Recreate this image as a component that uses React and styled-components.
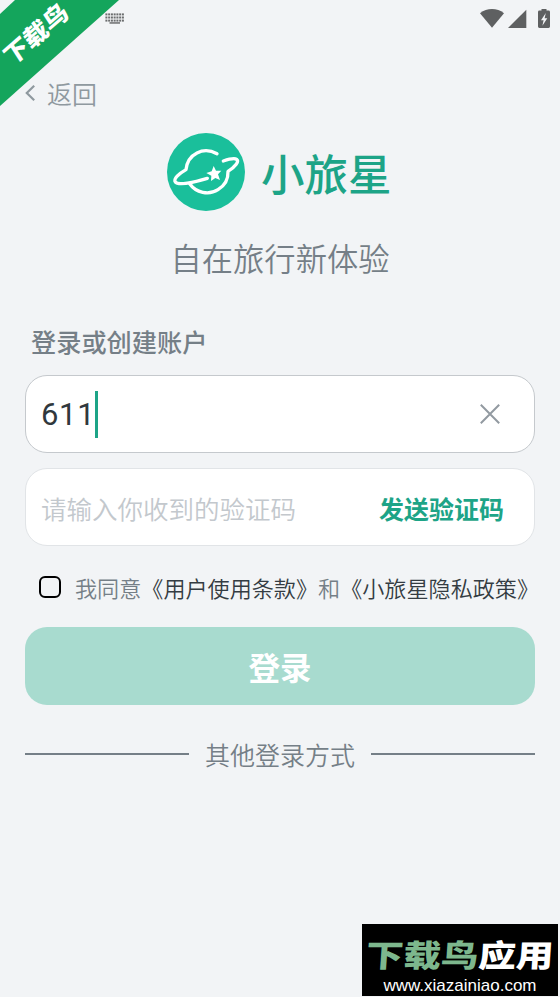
import styled, { createGlobalStyle } from 'styled-components'


const App = () => {
  return (
    <Page>
      <GlobalStyle />
      <StatusBar>
        <KeyboardIcon />
        <SystemIcons />
      </StatusBar>
      <BackButton>
        <BackIcon width="11" height="18" viewBox="0 0 11 18">
          <path d="M9.2 1.8 L1.8 9 L9.2 16.2" />
        </BackIcon>
        返回
      </BackButton>
      <Brand>
        <Logo />
        <BrandName>小旅星</BrandName>
      </Brand>
      <Slogan>自在旅行新体验</Slogan>
      <Label>登录或创建账户</Label>
      <Field $active>
        <Value>611</Value>
        <Caret />
        <ClearIcon width="20" height="20" viewBox="0 0 20 20">
          <path d="M0.8 0.8 L19.2 19.2 M19.2 0.8 L0.8 19.2" />
        </ClearIcon>
      </Field>
      <Field>
        <Placeholder>请输入你收到的验证码</Placeholder>
        <SendCode>发送验证码</SendCode>
      </Field>
      <Agreement>
        <Checkbox />
        <span>
          我同意<Link>《用户使用条款》</Link>和<Link>《小旅星隐私政策》</Link>
        </span>
      </Agreement>
      <LoginButton>登录</LoginButton>
      <Divider>
        <Line />
        其他登录方式
        <Line />
      </Divider>
      <Ribbon />
      <RibbonText>下载鸟</RibbonText>
      <Watermark>
        <WatermarkName>
          <Tint>下载鸟</Tint>应用
        </WatermarkName>
        <WatermarkUrl>www.xiazainiao.com</WatermarkUrl>
      </Watermark>
    </Page>
  )
}

export default App

const KeyboardIcon = () => (
  <svg width="20" height="12" viewBox="0 0 20 12" fill="#6b6d6e">
    {[0, 3.1, 6.2].map((y, row) =>
      [0, 1, 2, 3, 4, 5, 6].map((col) => (
        <rect key={`${row}-${col}`} x={0.4 + col * 2.75} y={y + 0.4} width="2" height="2" />
      ))
    )}
    <rect x="4.5" y="9.2" width="10.5" height="1.5" />
  </svg>
)

const SystemIcons = () => (
  <svg width="71" height="20" viewBox="0 0 71 20" fill="#5e6061">
    <path d="M0 4.2 C7 -1.3 17 -1.3 24 4.2 L12 18.8 Z" />
    <path d="M46.3 0.8 V19 H28 Z" />
    <path d="M58 3 Q58 1.6 59.4 1.6 H61.5 V-0.4 H66.5 V1.6 H68.6 Q70 1.6 70 3 V17.6 Q70 19 68.6 19 H59.4 Q58 19 58 17.6 Z" />
    <path d="M65.8 4 L61 11.2 H63.6 L62.4 16.8 L67.3 9.2 H64.6 Z" fill="#f2f4f6" />
  </svg>
)

const Logo = () => (
  <svg width="78" height="78" viewBox="52 38 234 234">
    <circle cx="169" cy="155" r="117" fill="#1abf9b" />
    <g fill="none" stroke="#fff" strokeWidth="10" strokeLinecap="round" strokeLinejoin="round">
      <path d="M202 100 C161 78 114 100 109 148 C88 160 70 176 77 185 C85 196 133 186 173 174" />
      <path d="M120 190 C139 217 177 226 205 208 C226 195 236 176 235 153 C258 139 269 123 261 117 C255 113 239 116 221 122" />
    </g>
    <path
      d="M192 137 L199 151 L215 151 L205 162 L211 179 L197 173 L184 182 L185 166 L170 158 L186 153 Z"
      fill="#fff"
    />
  </svg>
)

const GlobalStyle = createGlobalStyle`
  * {
    box-sizing: border-box;
  }
  body {
    margin: 0;
    background: #f2f4f6;
  }
`

const Page = styled.div`
  position: relative;
  width: 560px;
  height: 997px;
  padding: 0 25px;
  overflow: hidden;
  display: flex;
  flex-direction: column;
  background: #f2f4f6;
  color: #757f87;
  font-family: "Noto Sans CJK SC", sans-serif;
  font-size: 25px;
  font-weight: 350;
  white-space: nowrap;
`

const StatusBar = styled.div`
  display: flex;
  justify-content: space-between;
  align-items: flex-start;
  height: 74px;
  margin-right: -25px;
  padding: 9px 9px 0 80px;

  svg:first-child {
    margin-top: 4px;
  }
`

const BackButton = styled.button`
  display: flex;
  align-items: center;
  gap: 11px;
  height: 37px;
  padding: 0;
  border: none;
  background: none;
  color: #8f999f;
  font: inherit;
`

const BackIcon = styled.svg`
  fill: none;
  stroke: #8f999f;
  stroke-width: 2.2;
`

const Brand = styled.div`
  display: flex;
  align-items: center;
  height: 78px;
  margin-top: 22px;
  padding-left: 142px;
  gap: 16px;
`

const BrandName = styled.h1`
  margin: 2px 0 0;
  color: #1da487;
  font-size: 43.5px;
  font-weight: 500;
  line-height: 60px;
`

const Slogan = styled.p`
  margin: 25px 0 0;
  color: #757f87;
  font-size: 31.3px;
  line-height: 44px;
  text-align: center;
`

const Label = styled.label`
  margin: 43px 0 15px 6px;
  font-size: 25.2px;
  font-weight: 500;
  line-height: 37px;
`

const Field = styled.div`
  display: flex;
  align-items: center;
  height: 78px;
  margin-bottom: 15px;
  padding: 0 31px 0 15px;
  border: ${({ $active }) => ($active ? '1.5px solid #c5c9cd' : '1px solid #e1e4e7')};
  border-radius: 22px;
  background: #fff;
`

const Value = styled.span`
  color: #30383d;
  font-family: Roboto, sans-serif;
  font-size: 31px;
  font-weight: 400;
  letter-spacing: 0.7px;
`

const Caret = styled.span`
  width: 3px;
  height: 47px;
  background: #1da487;
`

const ClearIcon = styled.svg`
  margin-left: auto;
  margin-right: 3px;
  fill: none;
  stroke: #929aa1;
  stroke-width: 2;
`

const Placeholder = styled.span`
  color: #c3c8cd;
  font-size: 25.5px;
`

const SendCode = styled.span`
  margin-left: auto;
  margin-right: -1px;
  padding-top: 2px;
  color: #1da487;
  font-weight: 700;
`

const Agreement = styled.div`
  display: flex;
  align-items: center;
  height: 36px;
  margin-top: 8px;
  padding-left: 14px;
  gap: 14px;
  font-size: 22.1px;
`

const Checkbox = styled.span`
  flex: none;
  width: 22px;
  height: 22px;
  border: 2px solid #000;
  border-radius: 6px;
`

const Link = styled.span`
  color: #343c42;
`

const LoginButton = styled.button`
  flex: none;
  height: 78px;
  margin-top: 22px;
  padding: 0;
  border: none;
  border-radius: 22px;
  background: #a8dbcf;
  color: #fff;
  font: inherit;
  font-size: 31.5px;
  font-weight: 700;
`

const Divider = styled.div`
  display: flex;
  align-items: center;
  gap: 16px;
  height: 36px;
  margin-top: 31px;
`

const Line = styled.span`
  flex: 1;
  height: 1.5px;
  background: #757f87;
`

const Ribbon = styled.div`
  position: absolute;
  top: 0;
  left: 0;
  width: 119px;
  height: 106px;
  background: #14a55c;
  clip-path: polygon(15px 0, 100% 0, 0 100%, 0 14px);
`

const RibbonText = styled.div`
  position: absolute;
  top: 33px;
  left: 35px;
  color: #fff;
  font-size: 26px;
  font-weight: 900;
  line-height: 10px;
  transform: translate(-50%, -50%) rotate(-41deg) skewX(-8deg) scaleY(0.9);
`

const Watermark = styled.div`
  position: absolute;
  top: 924px;
  left: 362px;
  width: 196px;
  height: 72px;
  padding-top: 10px;
  background: #000;
  color: #fff;
  text-align: center;
`

const WatermarkName = styled.div`
  font-size: 37.5px;
  font-weight: 900;
  line-height: 40px;
  transform: skewX(-4deg) scaleY(0.83);
`

const Tint = styled.span`
  color: #7db78d;
`

const WatermarkUrl = styled.div`
  margin-top: 2px;
  font-family: "Liberation Sans", Arial, sans-serif;
  font-size: 17px;
  font-weight: 400;
  line-height: 20px;
`
